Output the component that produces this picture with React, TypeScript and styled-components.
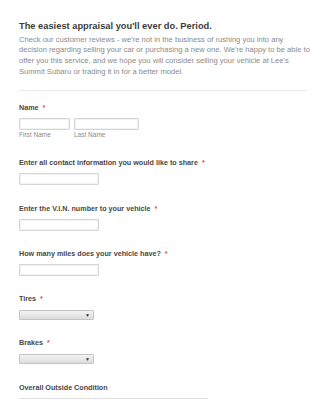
import React, { FC } from 'react';
import styled, { createGlobalStyle } from 'styled-components';

const Global = createGlobalStyle`
    html, body {
        margin: 0;
        padding: 0;
        background: #fff;
        font-family: "Liberation Sans", Arial, sans-serif;
    }
`;

const Page = styled.div`
    padding: 19px 18px 0 19px;
    width: 325px;
    box-sizing: border-box;
    overflow: hidden;
`;

const Heading = styled.h1`
    margin: 0;
    font-size: 9.3px;
    line-height: 14px;
    font-weight: bold;
    color: #3c3c3c;
`;

const Intro = styled.p`
    margin: 1.5px 0 0;
    font-size: 7.6px;
    line-height: 10.9px;
    color: #8a8a8a;
    width: 292px;
`;

const Divider = styled.hr`
    border: 0;
    border-top: 1px solid #ebebeb;
    margin: 12px 0 0;
    width: 288px;
`;

const Field = styled.div<{ top: number }>`
    padding-top: ${({ top }) => top}px;
`;

const Label = styled.div`
    font-size: 7.2px;
    line-height: 10px;
    font-weight: bold;
    color: #484848;
`;

const Star = styled.span`
    color: #e2493f;
    margin-left: 4px;
`;

const Row = styled.div`
    display: flex;
    gap: 4px;
    margin-top: 5px;
`;

const Part = styled.div`
    display: flex;
    flex-direction: column;
`;

const Input = styled.div<{ w: number }>`
    width: ${({ w }) => w}px;
    height: 12px;
    box-sizing: border-box;
    border: 1px solid #d6d6d6;
    border-radius: 1px;
    background: #fff;
    box-shadow: inset 0 0 0 1px #f2f2f2;
`;

const Sub = styled.div`
    font-size: 6.5px;
    line-height: 8px;
    color: #8a8a8a;
    margin-top: 1px;
`;

const Single = styled(Input)`
    margin-top: 5px;
`;

const Select = styled.div`
    margin-top: 6px;
    width: 75px;
    height: 10px;
    box-sizing: border-box;
    border: 1px solid #c4c4c4;
    border-radius: 1px;
    background: linear-gradient(#f4f4f4, #dcdcdc);
    display: flex;
    align-items: center;
    justify-content: flex-end;
    padding-right: 3px;
    font-size: 5px;
    color: #333;
`;

const Rule = styled.div`
    margin-top: 5px;
    width: 189px;
    border-top: 1px solid #e0e0e0;
`;

const TextField: FC<{ top: number; label: string; required?: boolean }> = ({ top, label, required }) => (
    <Field top={top}>
        <Label>
            {label}
            {required && <Star>*</Star>}
        </Label>
        <Single w={80} />
    </Field>
);

const SelectField: FC<{ top: number; label: string }> = ({ top, label }) => (
    <Field top={top}>
        <Label>
            {label}
            <Star>*</Star>
        </Label>
        <Select>▼</Select>
    </Field>
);

export default function App() {
    return (
        <Page>
            <Global />
            <Heading>The easiest appraisal you'll ever do. Period.</Heading>
            <Intro>
                Check our customer reviews - we're not in the business of rushing you into any
                decision regarding selling your car or purchasing a new one. We're happy to be able to
                offer you this service, and we hope you will consider selling your vehicle at Lee's
                Summit Subaru or trading it in for a better model.
            </Intro>
            <Divider />
            <Field top={12}>
                <Label>
                    Name<Star>*</Star>
                </Label>
                <Row>
                    <Part>
                        <Input w={51} />
                        <Sub>First Name</Sub>
                    </Part>
                    <Part>
                        <Input w={65} />
                        <Sub>Last Name</Sub>
                    </Part>
                </Row>
            </Field>
            <TextField top={19} label="Enter all contact information you would like to share" required />
            <TextField top={19} label="Enter the V.I.N. number to your vehicle" required />
            <TextField top={18} label="How many miles does your vehicle have?" required />
            <SelectField top={18} label="Tires" />
            <SelectField top={18} label="Brakes" />
            <Field top={19}>
                <Label>Overall Outside Condition</Label>
                <Rule />
            </Field>
        </Page>
    );
}
